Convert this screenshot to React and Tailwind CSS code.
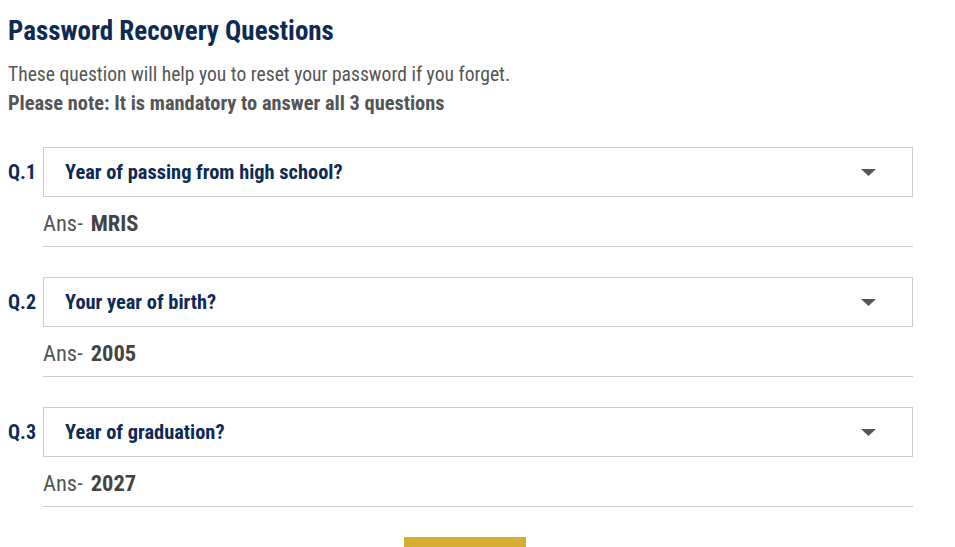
import React from "react";

const questions = [
  { num: "Q.1", text: "Year of passing from high school?", ans: "MRIS" },
  { num: "Q.2", text: "Your year of birth?", ans: "2005" },
  { num: "Q.3", text: "Year of graduation?", ans: "2027" },
];

export default function App() {
  return (
    <div
      className="h-screen bg-white px-2 pt-[13px] overflow-hidden"
      style={{ fontFamily: '"Roboto Condensed", Roboto, sans-serif' }}
    >
      <h1 className="text-[27px] leading-[36px] font-bold text-[#0d2a56]">Password Recovery Questions</h1>
      <p className="mt-[14px] text-[19.6px] leading-[24px] text-[#555]">
        These question will help you to reset your password if you forget.
      </p>
      <p className="mt-[4px] text-[20.4px] leading-[24px] font-bold text-[#555]">
        Please note: It is mandatory to answer all 3 questions
      </p>

      <div className="mt-[32px] flex flex-col gap-[30px] w-[905px]">
        {questions.map((q) => (
          <div key={q.num}>
            <div className="flex items-center">
              <span className="w-[35px] text-[20px] font-bold text-[#0d2a56]">{q.num}</span>
              <div className="flex-1 h-[50px] border border-[#ccc] flex items-center justify-between pl-[21px] pr-[36px]">
                <span className="text-[20.4px] font-bold text-[#0d2a56]">{q.text}</span>
                <svg width="15" height="7" viewBox="0 0 15 7">
                  <path d="M0 0 L15 0 L7.5 7 Z" fill="#555" />
                </svg>
              </div>
            </div>
            <div className="ml-[35px] h-[50px] pt-[4px] border-b border-[#ccc] flex items-center text-[22.5px] text-[#444]">
              <span className="font-normal text-[#555]">Ans-</span>
              <span className="ml-[8px] font-bold">{q.ans}</span>
            </div>
          </div>
        ))}
      </div>

      <div className="flex justify-center w-[914px] mt-[30px]">
        <button className="w-[122px] h-[40px] bg-[#d6ad33]"></button>
      </div>
    </div>
  );
}
